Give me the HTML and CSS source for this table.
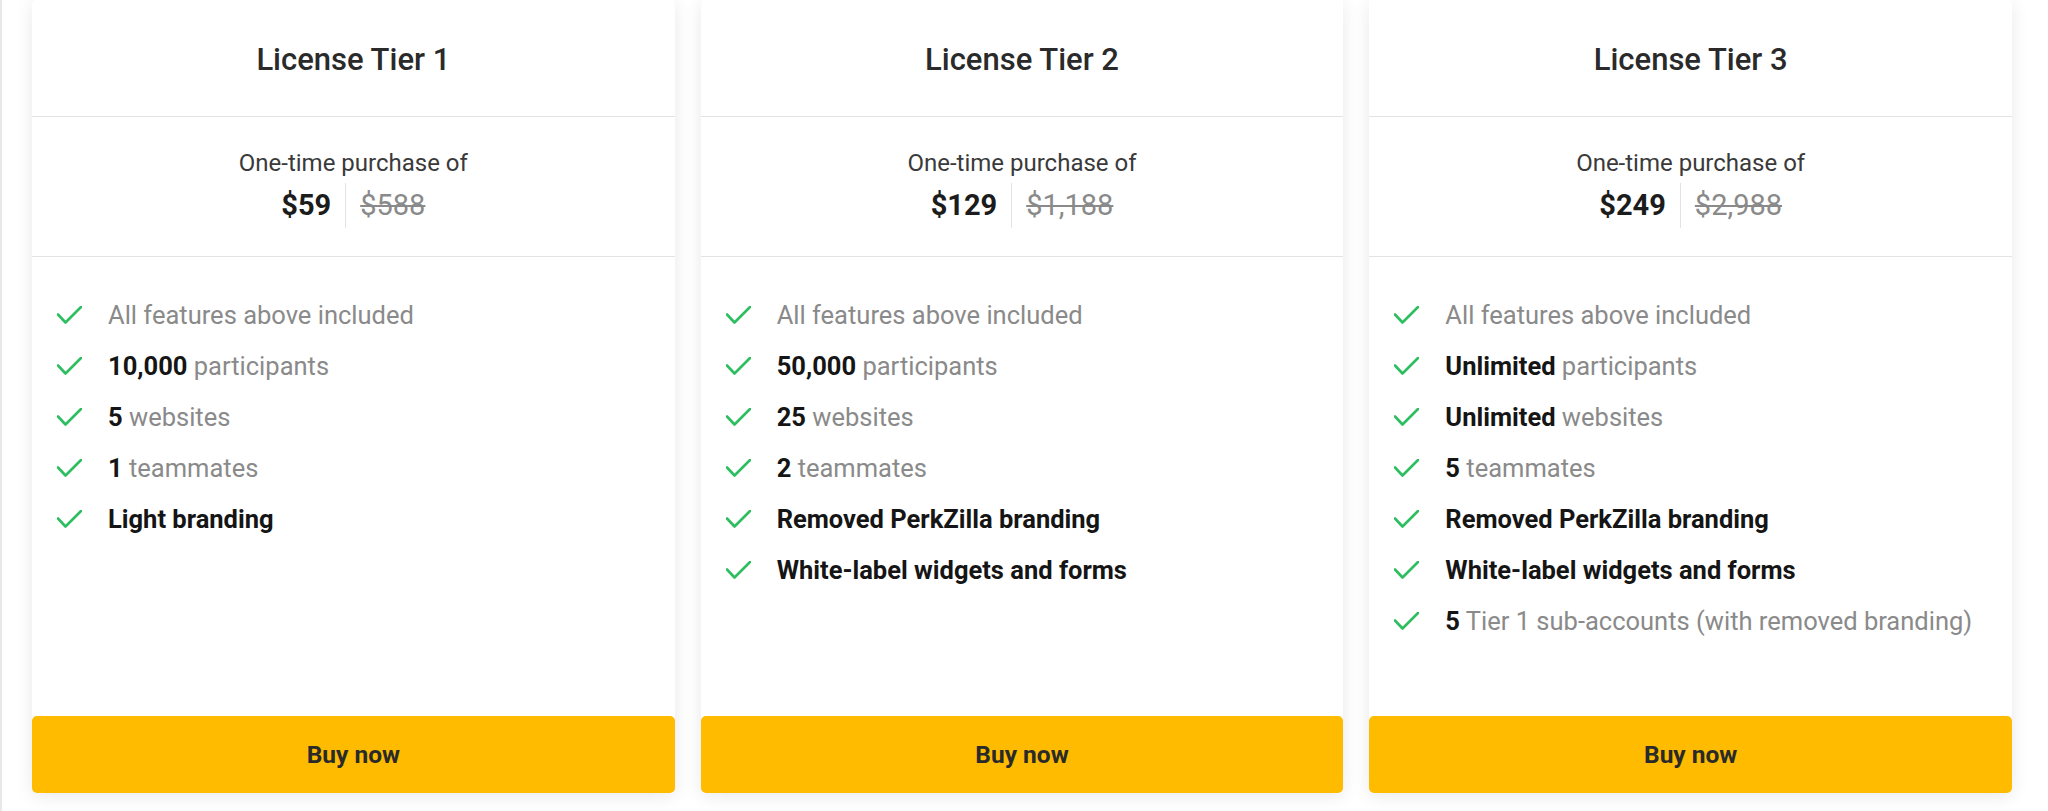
FILE: index.html
```html
<!DOCTYPE html>
<html lang="en">
<head>
<meta charset="utf-8">
<title>License Tiers</title>
<link rel="stylesheet" href="styles.css">
</head>
<body>
<main class="tiers">
  <section class="card">
    <header class="card-head"><h2>License Tier 1</h2></header>
    <div class="price-box">
      <div class="price-label">One-time purchase of</div>
      <div class="price-row"><span class="price-now">$59</span><span class="price-old">$588</span></div>
    </div>
    <ul class="features">
      <li><svg class="check" viewBox="0 0 25 18"><path d="M1 8.5 L8.5 16.5 L24 1"/></svg><span>All features above included</span></li>
      <li><svg class="check" viewBox="0 0 25 18"><path d="M1 8.5 L8.5 16.5 L24 1"/></svg><span><b>10,000</b> participants</span></li>
      <li><svg class="check" viewBox="0 0 25 18"><path d="M1 8.5 L8.5 16.5 L24 1"/></svg><span><b>5</b> websites</span></li>
      <li><svg class="check" viewBox="0 0 25 18"><path d="M1 8.5 L8.5 16.5 L24 1"/></svg><span><b>1</b> teammates</span></li>
      <li><svg class="check" viewBox="0 0 25 18"><path d="M1 8.5 L8.5 16.5 L24 1"/></svg><span><b>Light branding</b></span></li>
    </ul>
    <button class="buy">Buy now</button>
  </section>
  <section class="card">
    <header class="card-head"><h2>License Tier 2</h2></header>
    <div class="price-box">
      <div class="price-label">One-time purchase of</div>
      <div class="price-row"><span class="price-now">$129</span><span class="price-old">$1,188</span></div>
    </div>
    <ul class="features">
      <li><svg class="check" viewBox="0 0 25 18"><path d="M1 8.5 L8.5 16.5 L24 1"/></svg><span>All features above included</span></li>
      <li><svg class="check" viewBox="0 0 25 18"><path d="M1 8.5 L8.5 16.5 L24 1"/></svg><span><b>50,000</b> participants</span></li>
      <li><svg class="check" viewBox="0 0 25 18"><path d="M1 8.5 L8.5 16.5 L24 1"/></svg><span><b>25</b> websites</span></li>
      <li><svg class="check" viewBox="0 0 25 18"><path d="M1 8.5 L8.5 16.5 L24 1"/></svg><span><b>2</b> teammates</span></li>
      <li><svg class="check" viewBox="0 0 25 18"><path d="M1 8.5 L8.5 16.5 L24 1"/></svg><span><b>Removed PerkZilla branding</b></span></li>
      <li><svg class="check" viewBox="0 0 25 18"><path d="M1 8.5 L8.5 16.5 L24 1"/></svg><span><b>White-label widgets and forms</b></span></li>
    </ul>
    <button class="buy">Buy now</button>
  </section>
  <section class="card">
    <header class="card-head"><h2>License Tier 3</h2></header>
    <div class="price-box">
      <div class="price-label">One-time purchase of</div>
      <div class="price-row"><span class="price-now">$249</span><span class="price-old">$2,988</span></div>
    </div>
    <ul class="features">
      <li><svg class="check" viewBox="0 0 25 18"><path d="M1 8.5 L8.5 16.5 L24 1"/></svg><span>All features above included</span></li>
      <li><svg class="check" viewBox="0 0 25 18"><path d="M1 8.5 L8.5 16.5 L24 1"/></svg><span><b>Unlimited</b> participants</span></li>
      <li><svg class="check" viewBox="0 0 25 18"><path d="M1 8.5 L8.5 16.5 L24 1"/></svg><span><b>Unlimited</b> websites</span></li>
      <li><svg class="check" viewBox="0 0 25 18"><path d="M1 8.5 L8.5 16.5 L24 1"/></svg><span><b>5</b> teammates</span></li>
      <li><svg class="check" viewBox="0 0 25 18"><path d="M1 8.5 L8.5 16.5 L24 1"/></svg><span><b>Removed PerkZilla branding</b></span></li>
      <li><svg class="check" viewBox="0 0 25 18"><path d="M1 8.5 L8.5 16.5 L24 1"/></svg><span><b>White-label widgets and forms</b></span></li>
      <li><svg class="check" viewBox="0 0 25 18"><path d="M1 8.5 L8.5 16.5 L24 1"/></svg><span><b>5</b> Tier 1 sub-accounts (with removed branding)</span></li>
    </ul>
    <button class="buy">Buy now</button>
  </section>
</main>
</body>
</html>
```
FILE: styles.css
```css
* { box-sizing: border-box; }

html, body {
  margin: 0;
  padding: 0;
  background: #ffffff;
}

body {
  font-family: Roboto, "Noto Sans", "Liberation Sans", sans-serif;
  color: #222;
  border-left: 2px solid #e8e8e8;
  height: 811px;
  overflow: hidden;
}

.tiers {
  display: flex;
  gap: 26px;
  padding: 0 36px 0 30px;
}

.card {
  flex: 1 1 0;
  height: 793px;
  display: flex;
  flex-direction: column;
  background: #fff;
  border-radius: 4px;
  box-shadow: 0 3px 18px rgba(0, 0, 0, 0.09);
}

.card-head {
  height: 117px;
  border-bottom: 1px solid #e3e3e3;
  display: flex;
  align-items: center;
  justify-content: center;
  padding-top: 3px;
}

.card-head h2 {
  margin: 0;
  font-size: 31px;
  font-weight: 500;
  color: #2a2a2a;
  line-height: 40px;
}

.price-box {
  border-bottom: 1px solid #e3e3e3;
  padding: 30px 0 28px;
  text-align: center;
}

.price-label {
  font-size: 24px;
  line-height: 32px;
  color: #3a3a3a;
  margin-bottom: 4px;
}

.price-row {
  display: flex;
  justify-content: center;
  line-height: 45px;
  font-size: 29px;
}

.price-now {
  font-weight: 700;
  color: #1c1c1c;
  padding-right: 14px;
  border-right: 1px solid #e3e3e3;
}

.price-old {
  color: #8a8a8a;
  text-decoration: line-through;
  padding-left: 14px;
}

.features {
  list-style: none;
  margin: 0;
  padding: 32px 0 0 25px;
  flex: 1 1 auto;
}

.features li {
  display: flex;
  align-items: center;
  gap: 26px;
  height: 51px;
  font-size: 25.5px;
  color: #8a8a8a;
  white-space: nowrap;
}

.features b {
  font-weight: 700;
  color: #151515;
}

.check {
  width: 25px;
  height: 18px;
  flex: none;
  fill: none;
  stroke: #2dbe60;
  stroke-width: 2.6;
  stroke-linecap: round;
  stroke-linejoin: round;
}

.buy {
  height: 77px;
  margin-bottom: 0;
  border: none;
  border-radius: 5px;
  background: #ffbb00;
  font-family: Roboto, "Noto Sans", "Liberation Sans", sans-serif;
  font-size: 24.5px;
  font-weight: 700;
  color: #2a2a2a;
  cursor: pointer;
}
```
